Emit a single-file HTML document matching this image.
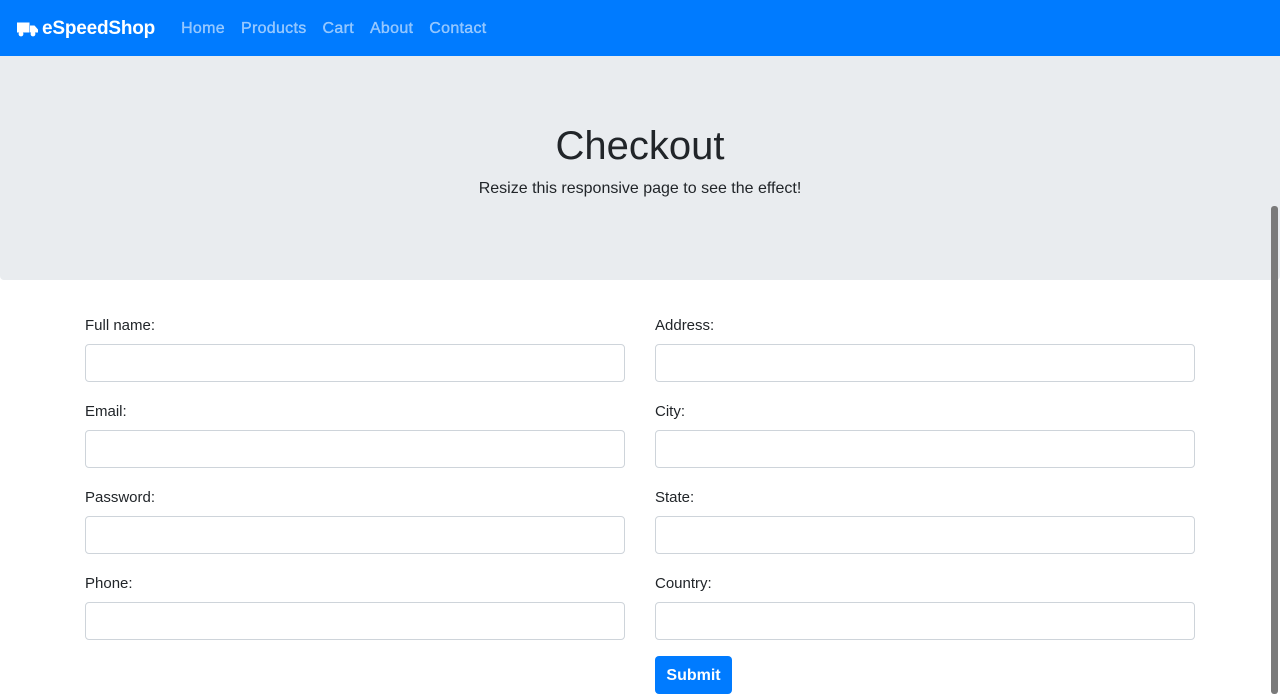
<!DOCTYPE html>
<html><head><style>
*{box-sizing:border-box;margin:0;padding:0}
body{width:1280px;height:694px;overflow:hidden;font-family:"Liberation Sans",sans-serif;color:#212529;background:#fff;position:relative}
nav{height:56px;background:#007bff;display:flex;align-items:center;padding-left:17px;padding-top:2px}
.brand{color:#fff;font-size:19px;display:flex;align-items:center;margin-right:18px;font-weight:bold;letter-spacing:-0.2px}
.brand svg{margin-right:4px}
nav a{color:rgba(255,255,255,.55);font-size:16px;margin:0 8px;text-decoration:none;letter-spacing:0.3px;-webkit-text-stroke:0.3px rgba(255,255,255,.55)}
.jumbo{background:#e9ecef;height:224px;border-radius:0 0 4px 4px;text-align:center;padding-top:66px}
.jumbo h1{font-size:40px;font-weight:500;line-height:48px}
.jumbo p{font-size:16px;margin-top:10px}
.col{position:absolute;width:540px}
label{display:block;font-size:15px;height:28px;padding-top:1px}
.in{height:38px;border:1px solid #ced4da;border-radius:4px;margin-bottom:20px}
.btn{background:#007bff;color:#fff;font-size:16px;font-weight:bold;width:77px;height:38px;border-radius:4px;display:flex;align-items:center;justify-content:center;padding-top:2px}
.sb{position:absolute;left:1271px;top:206px;width:7px;height:488px;background:#7a7a7a;border-radius:3px}
</style></head><body>
<nav><div class="brand"><svg width="21" height="16" viewBox="0 0 21 16"><path d="M0 1.5h12.5v10H0z M13 4.5h4.5l3.5 4V11.5h-8z" fill="#fff"/><circle cx="4" cy="13" r="2.4" fill="#fff"/><circle cx="16" cy="13" r="2.4" fill="#fff"/></svg>eSpeedShop</div>
<a>Home</a><a>Products</a><a>Cart</a><a>About</a><a>Contact</a></nav>
<div class="jumbo"><h1>Checkout</h1><p>Resize this responsive page to see the effect!</p></div>
<div class="col" style="left:85px;top:316px">
<label>Full name:</label><div class="in"></div>
<label>Email:</label><div class="in"></div>
<label>Password:</label><div class="in"></div>
<label>Phone:</label><div class="in"></div>
</div>
<div class="col" style="left:655px;top:316px">
<label>Address:</label><div class="in"></div>
<label>City:</label><div class="in"></div>
<label>State:</label><div class="in"></div>
<label>Country:</label><div class="in" style="margin-bottom:16px"></div>
<div class="btn">Submit</div>
</div>
<div class="sb"></div>
</body></html>
